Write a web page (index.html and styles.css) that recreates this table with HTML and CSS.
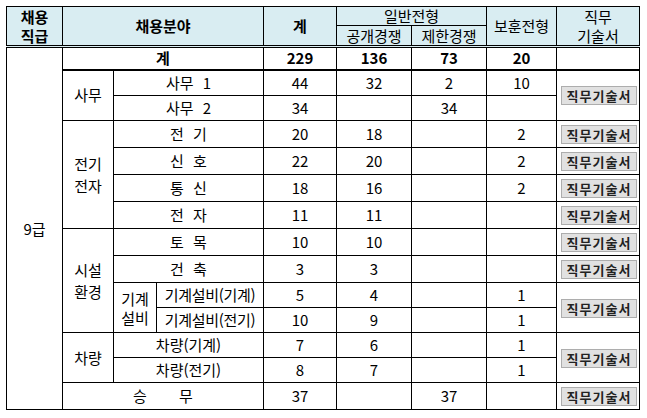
FILE: index.html
```html
<!DOCTYPE html>
<html lang="ko">
<head>
<meta charset="utf-8">
<title>채용분야</title>
<link rel="stylesheet" href="styles.css">
</head>
<body>
<div class="wrap">
<table class="recruit">
  <colgroup>
    <col class="c-grade"><col class="c-group"><col class="c-sub"><col class="c-name">
    <col class="c-total"><col class="c-open"><col class="c-limit"><col class="c-vet"><col class="c-doc">
  </colgroup>
  <thead>
    <tr class="h1">
      <th rowspan="2" class="b two">채용<br>직급</th>
      <th rowspan="2" colspan="3" class="b">채용분야</th>
      <th rowspan="2" class="b">계</th>
      <th colspan="2">일반전형</th>
      <th rowspan="2">보훈전형</th>
      <th rowspan="2" class="two">직무<br>기술서</th>
    </tr>
    <tr class="h2">
      <th>공개경쟁</th>
      <th>제한경쟁</th>
    </tr>
  </thead>
  <tbody>
    <tr class="total">
      <td rowspan="14" class="grade">9급</td>
      <td colspan="3" class="b">계</td>
      <td class="b">229</td>
      <td class="b">136</td>
      <td class="b">73</td>
      <td class="b">20</td>
      <td></td>
    </tr>
    <tr class="r26">
      <td rowspan="2" class="grp">사무</td>
      <td colspan="2" class="sp">사무 1</td>
      <td>44</td><td>32</td><td>2</td><td>10</td>
      <td rowspan="2"><button class="doc-btn" type="button">직무기술서</button></td>
    </tr>
    <tr class="r25">
      <td colspan="2" class="sp">사무 2</td>
      <td>34</td><td></td><td>34</td><td></td>
    </tr>
    <tr class="r27">
      <td rowspan="4" class="grp">전기<br>전자</td>
      <td colspan="2" class="sp">전 기</td>
      <td>20</td><td>18</td><td></td><td>2</td>
      <td><button class="doc-btn" type="button">직무기술서</button></td>
    </tr>
    <tr class="r27">
      <td colspan="2" class="sp">신 호</td>
      <td>22</td><td>20</td><td></td><td>2</td>
      <td><button class="doc-btn" type="button">직무기술서</button></td>
    </tr>
    <tr class="r27">
      <td colspan="2" class="sp">통 신</td>
      <td>18</td><td>16</td><td></td><td>2</td>
      <td><button class="doc-btn" type="button">직무기술서</button></td>
    </tr>
    <tr class="r27">
      <td colspan="2" class="sp">전 자</td>
      <td>11</td><td>11</td><td></td><td></td>
      <td><button class="doc-btn" type="button">직무기술서</button></td>
    </tr>
    <tr class="r27">
      <td rowspan="4" class="grp">시설<br>환경</td>
      <td colspan="2" class="sp">토 목</td>
      <td>10</td><td>10</td><td></td><td></td>
      <td><button class="doc-btn" type="button">직무기술서</button></td>
    </tr>
    <tr class="r27">
      <td colspan="2" class="sp">건 축</td>
      <td>3</td><td>3</td><td></td><td></td>
      <td><button class="doc-btn" type="button">직무기술서</button></td>
    </tr>
    <tr class="r25">
      <td rowspan="2" class="sub">기계<br>설비</td>
      <td class="tight">기계설비(기계)</td>
      <td>5</td><td>4</td><td></td><td>1</td>
      <td rowspan="2"><button class="doc-btn" type="button">직무기술서</button></td>
    </tr>
    <tr class="r25">
      <td class="tight">기계설비(전기)</td>
      <td>10</td><td>9</td><td></td><td>1</td>
    </tr>
    <tr class="r25">
      <td rowspan="2" class="grp">차량</td>
      <td colspan="2">차량(기계)</td>
      <td>7</td><td>6</td><td></td><td>1</td>
      <td rowspan="2"><button class="doc-btn" type="button">직무기술서</button></td>
    </tr>
    <tr class="r25">
      <td colspan="2">차량(전기)</td>
      <td>8</td><td>7</td><td></td><td>1</td>
    </tr>
    <tr class="r27">
      <td colspan="3" class="wide">승 무</td>
      <td>37</td><td></td><td>37</td><td></td>
      <td><button class="doc-btn" type="button">직무기술서</button></td>
    </tr>
  </tbody>
</table>
</div>
</body>
</html>
```

FILE: styles.css
```css
body {
  margin: 0;
  background: #ffffff;
  font-family: "Noto Sans CJK KR", "Noto Sans", sans-serif;
  color: #000000;
}

.wrap {
  padding: 6px 0 0 6px;
}

.recruit {
  border-collapse: collapse;
  table-layout: fixed;
  width: 633px;
  font-size: 15px;
}

.c-grade { width: 56px; }
.c-group { width: 51px; }
.c-sub { width: 43px; }
.c-name { width: 107px; }
.c-total { width: 73px; }
.c-open { width: 75px; }
.c-limit { width: 75px; }
.c-vet { width: 70px; }
.c-doc { width: 83px; }

.recruit th,
.recruit td {
  border: 1px solid #000000;
  padding: 0;
  text-align: center;
  vertical-align: middle;
  line-height: 18px;
  font-weight: normal;
  white-space: nowrap;
}

.recruit th {
  background: #d9edf2;
}

.recruit .b {
  font-weight: bold;
}

.recruit th.two {
  line-height: 19px;
}

.h1 { height: 19px; }
.h2 { height: 18px; }

.recruit tbody tr.total td {
  border-top: 3px double #000000;
}

.recruit tr.total td {
  border-bottom: 2px solid #000000;
}

.recruit tr.total td.grade {
  border-bottom: 1px solid #000000;
}

.total { height: 23px; }
.r25 { height: 25px; }
.r26 { height: 26px; }
.r27 { height: 27px; }

.recruit td.grp {
  line-height: 22px;
}

.recruit td.sub {
  line-height: 19px;
}

.recruit td.sp {
  word-spacing: 5px;
}

.recruit td.wide {
  word-spacing: 28px;
}

.recruit td.tight {
  letter-spacing: -0.3px;
}

.doc-btn {
  display: inline-block;
  width: 76px;
  height: 19px;
  margin: 0 0 0 1px;
  padding: 0 0 0 1px;
  font-family: "Noto Sans CJK KR", sans-serif;
  font-size: 13px;
  font-weight: bold;
  letter-spacing: 1px;
  line-height: 17px;
  color: #222222;
  background: #e1e1e1;
  border: 1px solid #adadad;
  border-radius: 0;
  vertical-align: middle;
}
```
